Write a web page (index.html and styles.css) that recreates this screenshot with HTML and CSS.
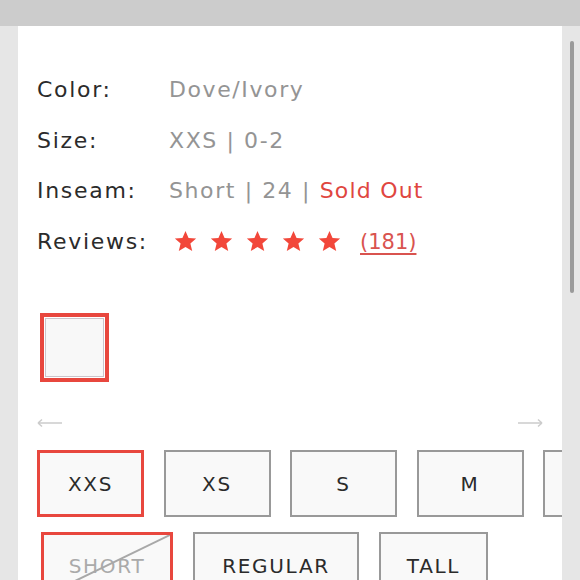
FILE: index.html
```html
<!DOCTYPE html>
<html>
<head>
<meta charset="utf-8">
<link rel="stylesheet" href="styles.css">
</head>
<body>
<div class="topbar"></div>
<div class="page">
  <div class="panel">
    <div class="details">
      <div class="label">Color:</div>
      <div class="value">Dove/Ivory</div>
      <div class="label">Size:</div>
      <div class="value">XXS | 0-2</div>
      <div class="label">Inseam:</div>
      <div class="value">Short | 24 | <span class="soldout">Sold Out</span></div>
      <div class="label">Reviews:</div>
      <div class="value reviews">
        <span class="stars">
          <svg class="star" viewBox="0 0 24 24"><path d="M12 1l3.2 7.3 7.9.6-6 5.2 1.9 7.8L12 17.8l-7 4.1 1.9-7.8-6-5.2 7.9-.6z"/></svg>
          <svg class="star" viewBox="0 0 24 24"><path d="M12 1l3.2 7.3 7.9.6-6 5.2 1.9 7.8L12 17.8l-7 4.1 1.9-7.8-6-5.2 7.9-.6z"/></svg>
          <svg class="star" viewBox="0 0 24 24"><path d="M12 1l3.2 7.3 7.9.6-6 5.2 1.9 7.8L12 17.8l-7 4.1 1.9-7.8-6-5.2 7.9-.6z"/></svg>
          <svg class="star" viewBox="0 0 24 24"><path d="M12 1l3.2 7.3 7.9.6-6 5.2 1.9 7.8L12 17.8l-7 4.1 1.9-7.8-6-5.2 7.9-.6z"/></svg>
          <svg class="star" viewBox="0 0 24 24"><path d="M12 1l3.2 7.3 7.9.6-6 5.2 1.9 7.8L12 17.8l-7 4.1 1.9-7.8-6-5.2 7.9-.6z"/></svg>
        </span>
        <a class="count" href="#">(181)</a>
      </div>
    </div>

    <div class="swatch"><div class="swatch-inner"></div></div>

    <div class="arrows">
      <svg class="arrow" viewBox="0 0 25 10"><path d="M1 5H25M1 5L5 1.5M1 5L5 8.5"/></svg>
      <svg class="arrow" viewBox="0 0 25 10"><path d="M0 5H24M24 5L20 1.5M24 5L20 8.5"/></svg>
    </div>

    <div class="sizes">
      <div class="opt selected">XXS</div>
      <div class="opt">XS</div>
      <div class="opt">S</div>
      <div class="opt">M</div>
      <div class="opt"></div>
    </div>

    <div class="inseams">
      <div class="opt selected disabled w-short">SHORT
        <svg class="slash" viewBox="0 0 100 100" preserveAspectRatio="none"><line x1="0" y1="100" x2="100" y2="0" vector-effect="non-scaling-stroke"/></svg>
      </div>
      <div class="opt w-regular">REGULAR</div>
      <div class="opt w-tall">TALL</div>
    </div>
  </div>
  <div class="gutter"><div class="thumb"></div></div>
</div>
</body>
</html>
```

FILE: styles.css
```css
html, body {
  margin: 0;
  padding: 0;
  height: 100%;
  overflow: hidden;
}
body {
  background: #e6e6e6;
  font-family: "DejaVu Sans", "Liberation Sans", sans-serif;
}
.topbar {
  height: 26px;
  background: #cccccc;
}
.page {
  display: flex;
  height: 554px;
}
.panel {
  margin-left: 18px;
  width: 525px;
  padding: 39px 0 0 19px;
  background: #ffffff;
  overflow: hidden;
}
.gutter {
  width: 18px;
  padding-top: 15px;
}
.thumb {
  margin-left: 8px;
  width: 4px;
  height: 252px;
  border-radius: 2px;
  background: #9a9a9a;
}
.details {
  display: grid;
  grid-template-columns: 132px auto;
  grid-auto-rows: 50.5px;
  align-items: center;
  font-size: 22px;
  line-height: 50px;
}
.label {
  color: #2b2b2b;
  letter-spacing: 1.7px;
}
.value {
  color: #949494;
  letter-spacing: 1.6px;
  white-space: nowrap;
}
.soldout {
  color: #e0463f;
  letter-spacing: 1.2px;
}
.reviews {
  display: flex;
  align-items: center;
}
.stars {
  display: flex;
  gap: 13px;
  margin-left: 5px;
}
.star {
  width: 23px;
  height: 23px;
  fill: #f2473a;
}
.count {
  margin-left: 19px;
  font-size: 21px;
  color: #d9534f;
  text-decoration: underline;
  text-underline-offset: 4px;
  text-decoration-thickness: 2px;
  letter-spacing: 0;
}
.swatch {
  margin: 46px 0 0 3px;
  width: 69px;
  height: 69px;
  box-sizing: border-box;
  border: 4px solid #e8473e;
  padding: 1px;
  background: #fff;
}
.swatch-inner {
  height: 100%;
  box-sizing: border-box;
  border: 1px solid #cbc4cb;
  background: #f8f8f8;
}
.arrows {
  display: flex;
  justify-content: space-between;
  margin-top: 36px;
  width: 506px;
  height: 10px;
}
.arrow {
  width: 25px;
  height: 10px;
  fill: none;
  stroke: #cccccc;
  stroke-width: 1.5;
}
.sizes {
  display: flex;
  gap: 19.5px;
  margin-top: 22px;
}
.opt {
  position: relative;
  flex: none;
  width: 107px;
  height: 67px;
  box-sizing: border-box;
  border: 2px solid #999999;
  background: #f9f9f9;
  display: flex;
  align-items: center;
  justify-content: center;
  font-size: 20px;
  letter-spacing: 1.7px;
  color: #2b2b2b;
}
.opt.selected {
  border: 3px solid #e8473e;
}
.opt.disabled {
  color: #aaaaaa;
}
.inseams {
  display: flex;
  gap: 20px;
  margin: 15px 0 0 4px;
}
.w-short { width: 132px; }
.w-regular { width: 166px; }
.w-tall { width: 109px; }
.slash {
  position: absolute;
  left: 0;
  top: 0;
  width: 100%;
  height: 100%;
  stroke: #a8a8a8;
  stroke-width: 2;
}
```
